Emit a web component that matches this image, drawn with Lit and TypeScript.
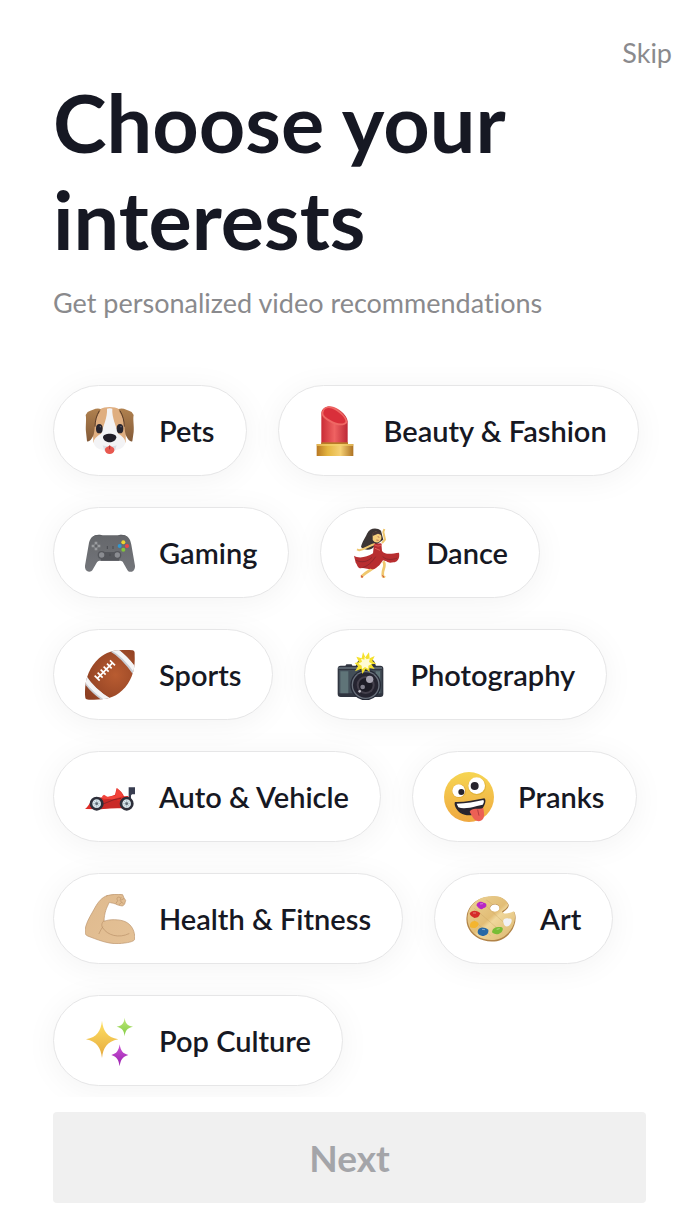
import { LitElement, html, svg, css } from "lit";
import { customElement, state } from "lit/decorators.js";

const dog = svg`
  <defs><linearGradient id="ear" x1="0" y1="0" x2="0" y2="1"><stop offset="0" stop-color="#b0814f"/><stop offset="1" stop-color="#835a38"/></linearGradient></defs>
  <path d="M45 10C60 1 88 1 103 10C120 20 124 60 122 108C110 132 38 132 25 108C22 60 28 20 45 10Z" fill="#dfae80"/>
  <path d="M66 8C70 6 78 6 82 8C80 35 94 60 99 82C112 92 122 98 121 112C114 130 96 134 74 134C52 134 32 130 26 112C25 98 36 92 49 82C54 60 68 35 66 8Z" fill="#f3f3f5"/>
  <path d="M53 118C64 122 84 122 95 118L90 134H58Z" fill="#dcdfe5"/>
  <path d="M47 9C35 4 22 12 8 18L2 27C5 40 1 60 3 78L6 106C12 109 19 101 24 91C31 76 27 55 34 38C38 25 46 20 47 9Z" fill="url(#ear)"/>
  <path d="M101 9C113 4 126 12 140 18L146 27C143 40 148 60 146 78L142 106C136 109 129 101 124 91C117 76 121 55 114 38C110 25 102 20 101 9Z" fill="url(#ear)"/>
  <path d="M43 14C34 30 31 42 30 62M105 14C114 30 117 42 118 62" fill="none" stroke="#5a3c29" stroke-width="3"/>
  <ellipse cx="43" cy="68" rx="10" ry="14" fill="#26242e"/><ellipse cx="105" cy="68" rx="10" ry="14" fill="#26242e"/>
  <circle cx="46" cy="62" r="2" fill="#777786"/><circle cx="108" cy="62" r="2" fill="#777786"/>
  <path d="M54 94C54 80 94 80 94 94C94 103 82 109 74 109C66 109 54 103 54 94Z" fill="#211e28"/>
  <path d="M60 132C60 123 67 125 74 118C81 125 88 123 88 132C88 148 60 148 60 132Z" fill="#e8584f"/>
  <path d="M74 119V130" stroke="#a92f36" stroke-width="3"/>`;

const lipstick = svg`
  <defs>
    <linearGradient id="gold"><stop offset="0" stop-color="#b97822"/><stop offset=".3" stop-color="#e4b540"/><stop offset=".65" stop-color="#f5d074"/><stop offset="1" stop-color="#ad7222"/></linearGradient>
    <linearGradient id="rouge"><stop offset="0" stop-color="#c92c35"/><stop offset=".5" stop-color="#ef6262"/><stop offset="1" stop-color="#bd2836"/></linearGradient>
  </defs>
  <path d="M34 20C36 4 55-4 72 3C94 12 111 30 113 46V116H34Z" fill="url(#rouge)"/>
  <path d="M35 20C40-2 60 0 73 6C93 15 116 38 111 51C101 63 75 58 58 47C44 38 34 31 35 20Z" fill="#ef6864"/>
  <path d="M40 20C43 2 62 4 75 12C91 21 109 38 106 48C97 57 75 51 62 43C49 34 40 30 40 20Z" fill="#d92f3a"/>
  <rect x="34" y="109" width="80" height="10" fill="#b87b26"/>
  <path d="M20 114H130V150H20Z" fill="url(#gold)"/>
  <path d="M20 114H130V120H20Z" fill="#f4d16b" opacity=".65"/>`;

const gamepad = svg`
  <defs><linearGradient id="pad" x1="0" y1="0" x2="0" y2="1"><stop offset="0" stop-color="#65676b"/><stop offset="1" stop-color="#74767b"/></linearGradient></defs>
  <path d="M24 27C28 19 49 18 53 24H98C103 18 121 19 126 27Z" fill="#46484d"/>
  <path d="M35 22H115C129 22 136 34 139 50L150 113C151 133 132 136 127 126L113 101C110 98 107 98 103 98H47C42 98 39 99 36 103L22 127C17 135-2 132 0 113L11 50C14 33 21 22 35 22Z" fill="url(#pad)"/>
  <path d="M51 72H100L103 98H47Z" fill="#55575c"/>
  <path d="M33 41V67M20 54H46" stroke="#9a9c9f" stroke-width="8"/>
  <circle cx="33" cy="54" r="5" fill="#606267"/>
  <circle cx="115" cy="43" r="6" fill="#ecd530"/><circle cx="126" cy="54" r="6" fill="#ed4548"/><circle cx="104" cy="54" r="6" fill="#3098d2"/><circle cx="115" cy="65" r="6" fill="#83c43c"/>
  <g fill="#8a8c91" stroke="#55575c" stroke-width="4"><circle cx="50" cy="81" r="10"/><circle cx="97" cy="81" r="10"/></g>
  <path d="M67 54V63M84 54V63M75 77V84" stroke="#484a4f" stroke-width="3"/>`;

const dancer = svg`
  <path d="M87 8C74-3 52 0 45 17C39 31 31 39 27 57C38 69 61 68 68 53L94 35Z" fill="#3c3534"/>
  <path d="M81 103C71 121 50 126 31 143L29 149M94 100C105 116 88 123 93 145L99 149" fill="none" stroke="#efc76e" stroke-width="8" stroke-linejoin="round"/>
  <path d="M69 48C54 51 42 62 22 67L15 64M90 45L99 35L94 12L97 3" fill="none" stroke="#efc76e" stroke-width="6" stroke-linejoin="round"/>
  <path d="M62 16C74 5 90 15 88 31C86 45 70 48 62 36Z" fill="#f5cf7c"/>
  <path d="M60 15C74 7 87 11 90 22L78 17L62 24Z" fill="#463736"/>
  <path d="M77 26L82 28M73 36L80 37" stroke="#9e4542" stroke-width="2"/>
  <path d="M66 47L88 46L90 69C103 84 123 75 141 74C144 91 137 99 128 103C119 101 115 108 103 100L93 97L82 112C73 118 69 128 56 122C45 126 39 118 27 121C16 121 16 109 11 104L6 83C18 92 44 89 63 76Z" fill="#b82e30"/>
  <path d="M60 88C45 103 28 104 12 97M71 86C59 104 46 115 31 119M92 86C106 98 122 95 136 90" fill="none" stroke="#8f282c" stroke-width="3"/>
  <path d="M66 49C76 56 83 55 90 49M69 61L84 67" fill="none" stroke="#e4635a" stroke-width="3"/>
  <path d="M26 141L34 146L29 150ZM89 140L96 145L95 150Z" fill="#d24c3c"/>`;

const football = svg`
  <defs>
    <radialGradient id="leather" cx=".6" cy=".5" r=".65"><stop offset="0" stop-color="#b95c31"/><stop offset="1" stop-color="#8d3f22"/></radialGradient>
    <clipPath id="ball"><path d="M143 1C150 2 149 8 149 18C151 60 140 93 112 121C83 149 50 150 12 149C0 149 1 145 0 133C-1 88 13 52 42 25C70 0 102-2 143 1Z"/></clipPath>
  </defs>
  <g clip-path="url(#ball)">
    <path d="M-5-5H155V155H-5Z" fill="url(#leather)"/>
    <path d="M78-5C105 10 130 36 153 70M-4 81C14 110 41 135 72 154" fill="none" stroke="#c9ccd2" stroke-width="18"/>
    <path d="M80-6C108 9 132 33 155 67M-4 79C15 108 43 133 74 152" fill="none" stroke="#f4f4f5" stroke-width="13"/>
  </g>
  <path d="M37 85L84 37M29 77L44 92M38 68L53 83M47 59L62 74M56 50L71 65M66 41L80 55M75 31L90 46" fill="none" stroke="#fff" stroke-width="5"/>`;

const camera = svg`
  <path d="M26 52L31 43H47L51 52ZM59 49L64 36C77 20 106 20 116 36L120 49Z" fill="#303641"/>
  <rect x="5" y="47" width="137" height="94" rx="9" fill="#303540"/>
  <path d="M9 60H137V130H9Z" fill="#434e58"/>
  <path d="M13 64H37V130H13ZM119 64H132V130H119Z" fill="#5f7478"/>
  <path d="M7 54H138" stroke="#66727b" stroke-width="4"/>
  <circle cx="89" cy="105" r="46" fill="#252936"/><circle cx="89" cy="105" r="42" fill="#69707b"/><circle cx="89" cy="105" r="38" fill="#252430"/>
  <circle cx="89" cy="105" r="27" fill="#44404c"/><circle cx="89" cy="105" r="21" fill="#1d1c26"/>
  <circle cx="101" cy="88" r="11" fill="#a6a3b0"/><circle cx="80" cy="111" r="7" fill="#82808d"/><circle cx="71" cy="124" r="4" fill="#c2c1c9"/>
  <path d="M81 6L88 22L99 7L101 25L116 18L109 33L121 41L106 43L116 57L100 53L101 66L89 57L79 72L76 56L57 64L66 49L56 39L69 36L61 20L77 25Z" fill="#f5e12d"/>
  <path d="M86 20L92 28L102 25L99 36L108 41L97 47L97 57L87 51L78 58L77 47L67 41L78 35L75 26L85 29Z" fill="#fffbd4"/>`;

const car = svg`
  <path d="M131 46H150V67H141L136 73H131ZM131 67H138V96H131Z" fill="#383d50"/>
  <path d="M0 111C11 103 14 90 26 80C47 77 55 73 69 76L90 68L95 48C106 56 114 64 117 73L130 72V109H75L48 112Z" fill="#df2c27"/>
  <path d="M54 86L70 80H93L99 88L115 80L113 107L49 110Z" fill="#c92a27"/>
  <path d="M51 73L57 68L67 74L91 71L96 49C105 57 112 64 114 73L84 82L55 80Z" fill="#f1443b"/>
  <path d="M54 96L87 83L108 79" fill="none" stroke="#8c2426" stroke-width="3"/>
  <g fill="#d9e7ed" stroke="#2d2f3a" stroke-width="8"><circle cx="35" cy="95" r="17"/><circle cx="125" cy="95" r="17"/></g>
  <g fill="none" stroke="#9baeb8" stroke-width="2"><path d="M35 83V107M23 95H47M27 87L43 103M43 87L27 103M125 83V107M113 95H137M117 87L133 103M133 87L117 103"/></g>
  <circle cx="35" cy="95" r="4" fill="#5b6872"/><circle cx="125" cy="95" r="4" fill="#5b6872"/>`;

const zany = svg`
  <defs><linearGradient id="skin" x1="0" y1="0" x2="0" y2="1"><stop offset="0" stop-color="#f6d552"/><stop offset="1" stop-color="#efa840"/></linearGradient></defs>
  <circle cx="75" cy="75" r="75" fill="url(#skin)"/>
  <circle cx="45" cy="57" r="21" fill="#e2ac38"/><circle cx="99" cy="43" r="27" fill="#e2b43b"/>
  <circle cx="44" cy="56" r="19" fill="#fff"/><circle cx="98" cy="41" r="25" fill="#fff"/>
  <circle cx="52" cy="60" r="9" fill="#27242d"/><circle cx="92" cy="42" r="12" fill="#27242d"/>
  <path d="M33 90C60 91 93 85 121 79C128 84 123 100 115 110C99 132 70 135 49 123C36 113 29 98 33 90Z" fill="#29252e"/>
  <path d="M38 95C66 94 94 90 118 84C121 88 120 92 116 98L99 102C75 109 55 111 43 106Z" fill="#fff"/>
  <path d="M77 119C84 106 102 113 118 108C121 126 122 138 113 145C102 151 91 146 86 136Z" fill="#ec6055"/>
  <path d="M101 113L105 131" stroke="#b83b3f" stroke-width="3"/>`;

const arm = svg`
  <defs><linearGradient id="muscle" x1="0" y1="0" x2="1" y2="1"><stop offset="0" stop-color="#dfba8e"/><stop offset="1" stop-color="#e4c196"/></linearGradient></defs>
  <g stroke="#ba9168" stroke-width="2" stroke-linejoin="round" stroke-linecap="round">
    <path d="M66 5C79 1 98 0 113 2L117 12L122 19L119 30L113 36C105 35 97 33 92 30C84 27 78 27 73 25C65 41 58 55 57 82C73 75 105 75 123 84C140 93 151 112 149 136C147 143 128 147 100 149C66 150 35 136 8 126C-3 122 1 109 2 98C8 76 20 60 31 39C39 25 50 10 66 5Z" fill="url(#muscle)"/>
    <path d="M57 80C49 86 49 96 53 101C67 124 101 134 132 119M53 99C45 111 44 115 42 119" fill="none"/>
    <path d="M93 28L98 20C93 12 98 7 104 10M103 31L109 26M108 10L105 20L115 29M116 14L109 18" fill="none"/>
  </g>`;

const palette = svg`
  <defs><linearGradient id="wood" x1="0" y1="0" x2="1" y2="1"><stop offset="0" stop-color="#ecd498"/><stop offset=".48" stop-color="#e2bd76"/><stop offset=".55" stop-color="#f0d79b"/><stop offset="1" stop-color="#d9b46b"/></linearGradient></defs>
  <path d="M74 8C98 4 121 15 128 32C129 42 120 47 110 56C112 64 130 61 145 54C153 69 148 97 134 114C116 139 85 149 52 139C17 128-3 98 2 67C6 33 37 8 74 8ZM76 35C68 43 73 54 87 54C101 53 104 43 98 36C92 30 82 30 76 35Z" fill="#b18347" fill-rule="evenodd"/>
  <path d="M73 7C98 3 119 14 126 31C127 40 119 44 108 53C111 61 129 59 144 52C151 67 146 93 132 110C114 134 86 144 54 135C19 125 1 95 5 65C9 32 38 8 73 7ZM76 34C67 41 72 53 87 53C101 52 104 42 98 35C92 29 82 29 76 34Z" fill="url(#wood)" fill-rule="evenodd"/>
  <path d="M25 43L109 116M53 29L120 92M23 78L74 125M61 18L78 30" stroke="#c29b5a" stroke-width="2" opacity=".45"/>
  <path d="M32 35C30 25 45 19 53 26C64 26 64 40 53 42C43 51 37 40 32 35Z" fill="#b827c4"/>
  <path d="M11 59C17 47 34 49 43 58C39 67 37 72 25 72C20 67 15 68 11 59Z" fill="#d52c29"/>
  <path d="M12 91C17 78 33 79 38 89C36 103 20 105 12 99Z" fill="#f4b52f"/>
  <path d="M36 109C40 98 56 99 67 107C69 120 60 125 49 126C36 124 33 116 36 109Z" fill="#2769a6"/>
  <path d="M78 115C79 101 91 98 105 99C116 102 109 116 98 120C90 122 86 121 78 115Z" fill="#78bd35"/>
  <path d="M113 88C107 76 119 70 129 74C139 71 139 83 133 91C127 101 114 99 113 88Z" fill="#f1f2f6"/>
  <path d="M42 30L51 29M21 57L30 57M48 106L57 107M92 106L101 104" stroke="#fff" stroke-width="3" opacity=".4"/>`;

const sparkles = svg`
  <defs>
    <linearGradient id="sun" x1="0" y1="0" x2="0" y2="1"><stop offset="0" stop-color="#ffe265"/><stop offset="1" stop-color="#e5a83d"/></linearGradient>
    <linearGradient id="lime" x1="0" y1="0" x2="0" y2="1"><stop offset="0" stop-color="#c0e878"/><stop offset="1" stop-color="#80cb43"/></linearGradient>
    <linearGradient id="violet" x1="0" y1="0" x2="0" y2="1"><stop offset="0" stop-color="#cb55d6"/><stop offset="1" stop-color="#9a20ae"/></linearGradient>
  </defs>
  <path d="M51 14C55 45 65 63 100 70C65 77 55 96 51 126C47 96 37 77 3 70C37 63 47 45 51 14Z" fill="url(#sun)"/>
  <path d="M119 5C121 22 127 29 144 32C127 36 121 43 119 61C117 43 111 36 95 32C111 29 117 22 119 5Z" fill="url(#lime)"/>
  <path d="M104 85C107 104 113 113 130 117C113 122 107 131 104 151C101 131 95 122 79 117C95 113 101 104 104 85Z" fill="url(#violet)"/>`;

const interests = [
  { name: "Pets", art: dog },
  { name: "Beauty & Fashion", art: lipstick },
  { name: "Gaming", art: gamepad },
  { name: "Dance", art: dancer },
  { name: "Sports", art: football },
  { name: "Photography", art: camera },
  { name: "Auto & Vehicle", art: car },
  { name: "Pranks", art: zany },
  { name: "Health & Fitness", art: arm },
  { name: "Art", art: palette },
  { name: "Pop Culture", art: sparkles },
];

@customElement("app-root")
export class AppRoot extends LitElement {
  @state() private chosen = new Set<string>();

  static styles = css`
    :host {
      display: block;
      background: #fff;
      color: #161823;
      font-family: Lato, "Open Sans", sans-serif;
      font-variant-ligatures: none;
    }
    * { box-sizing: border-box; }
    button {
      font-family: inherit;
      margin: 0;
      cursor: pointer;
    }
    .top {
      display: flex;
      justify-content: flex-end;
      padding: 35px 28px 0;
    }
    .skip {
      border: 0;
      padding: 0;
      background: none;
      color: #8a8a8d;
      font-size: 27px;
      line-height: 36px;
    }
    .intro { padding: 2px 53px 0; }
    h1 {
      margin: 0;
      max-width: 560px;
      font-size: 81px;
      font-weight: 700;
      line-height: 97px;
    }
    .lead {
      margin: 18px 0 0;
      color: #8a8a8d;
      font-size: 27px;
      line-height: 36px;
    }
    .list {
      display: flex;
      flex-wrap: wrap;
      gap: 31px;
      margin: 0;
      padding: 64px 53px 11px;
      overflow: hidden;
      list-style: none;
    }
    .chip {
      display: flex;
      align-items: center;
      gap: 24px;
      height: 91px;
      padding: 0 31px;
      border: 1px solid #e6e6e7;
      border-radius: 46px;
      background: #fff;
      box-shadow: 0 4px 32px rgba(0, 0, 0, 0.05);
      color: #161823;
      font-size: 29px;
      font-weight: 600;
      line-height: 36px;
      white-space: nowrap;
    }
    .chip[aria-pressed="true"] { border-color: #161823; }
    .icon {
      flex: none;
      width: 50px;
      height: 50px;
    }
    .foot { padding: 15px 54px 18px 53px; }
    .next {
      display: block;
      width: 100%;
      height: 91px;
      border: 0;
      border-radius: 4px;
      background: #fe2c55;
      color: #fff;
      font-size: 37px;
      font-weight: 700;
    }
    .next:disabled {
      background: #f0f0f0;
      color: #a4a5a9;
      cursor: default;
    }
  `;

  private toggle(name: string) {
    const next = new Set(this.chosen);
    if (!next.delete(name)) next.add(name);
    this.chosen = next;
  }

  render() {
    return html`
      <header class="top"><button class="skip" type="button">Skip</button></header>
      <main>
        <div class="intro">
          <h1>Choose your interests</h1>
          <p class="lead">Get personalized video recommendations</p>
        </div>
        <ul class="list">
          ${interests.map(
            ({ name, art }) => html`
              <li>
                <button
                  class="chip"
                  type="button"
                  aria-pressed=${this.chosen.has(name) ? "true" : "false"}
                  @click=${() => this.toggle(name)}
                >
                  <svg class="icon" viewBox="0 0 150 150" aria-hidden="true">${art}</svg>
                  <span>${name}</span>
                </button>
              </li>
            `
          )}
        </ul>
      </main>
      <footer class="foot">
        <button class="next" type="button" ?disabled=${this.chosen.size === 0}>Next</button>
      </footer>
    `;
  }
}
